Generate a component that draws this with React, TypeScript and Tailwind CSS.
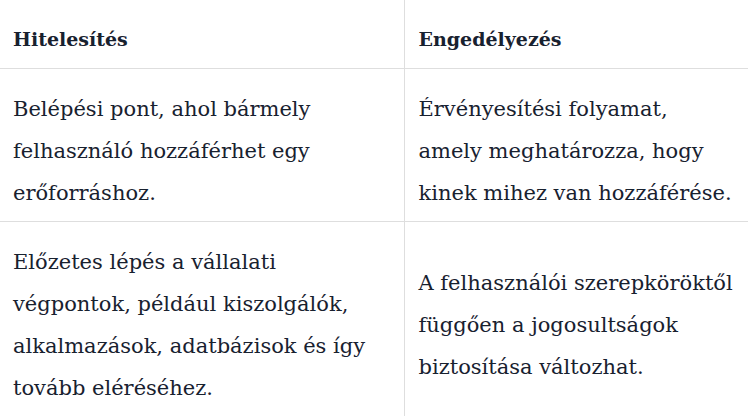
import React from 'react';

const rows: React.ReactNode[][] = [
  [
    'Belépési pont, ahol bármely felhasználó hozzáférhet egy erőforráshoz.',
    <>
      Érvényesítési folyamat,
      <br />
      amely meghatározza, hogy kinek mihez van hozzáférése.
    </>,
  ],
  [
    'Előzetes lépés a vállalati végpontok, például kiszolgálók, alkalmazások, adatbázisok és így tovább eléréséhez.',
    'A felhasználói szerepköröktől függően a jogosultságok biztosítása változhat.',
  ],
];

export default function App() {
  return (
    <div className="w-[748px] h-[417px] overflow-hidden bg-white text-[#18212f] font-['DejaVu_Serif',serif]">
      <table className="w-full border-collapse table-fixed">
        <colgroup>
          <col className="w-[404px]" />
          <col />
        </colgroup>
        <thead>
          <tr className="border-b border-[#dedede]">
            <th className="h-[68px] pl-[13px] pr-3 pt-[10px] text-left align-middle text-[19px] font-bold border-r border-[#dedede]">
              Hitelesítés
            </th>
            <th className="h-[68px] pl-[14px] pr-3 pt-[10px] text-left align-middle text-[19px] font-bold">
              Engedélyezés
            </th>
          </tr>
        </thead>
        <tbody>
          {rows.map((row, i) => (
            <tr key={i} className={i < rows.length - 1 ? 'border-b border-[#dedede]' : ''}>
              <td className="pt-[19px] pb-[7px] pl-[13px] pr-3 align-middle text-[21px] leading-[42px] border-r border-[#dedede]">
                {row[0]}
              </td>
              <td className="pt-[19px] pb-[7px] pl-[14px] pr-[6px] align-middle text-[21px] leading-[42px]">
                {row[1]}
              </td>
            </tr>
          ))}
        </tbody>
      </table>
    </div>
  );
}
